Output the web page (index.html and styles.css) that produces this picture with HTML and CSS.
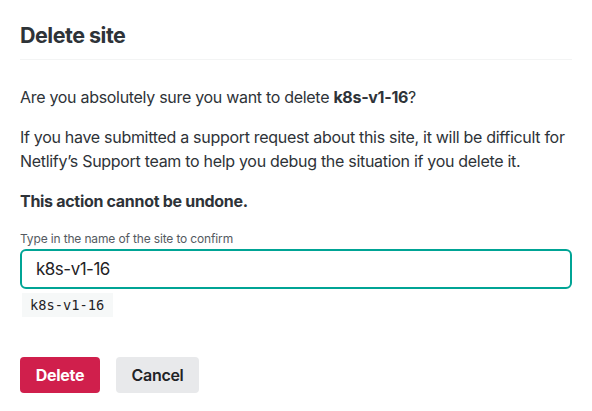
FILE: index.html
```html
<!DOCTYPE html>
<html>
<head>
<meta charset="utf-8">
<link rel="stylesheet" href="styles.css">
</head>
<body>
<div class="dialog">
  <h1 class="title">Delete site</h1>
  <div class="body">
    <p class="p1">Are you absolutely sure you want to delete <strong>k8s-v1-16</strong>?</p>
    <p class="p2">If you have submitted a support request about this site, it will be difficult for Netlify’s Support team to help you debug the situation if you delete it.</p>
    <p class="p3"><strong>This action cannot be undone.</strong></p>
    <label class="label">Type in the name of the site to confirm</label>
    <div class="input">k8s-v1-16</div>
    <div class="chip-row"><code class="chip">k8s-v1-16</code></div>
    <div class="actions">
      <button class="btn btn-danger">Delete</button>
      <button class="btn btn-cancel">Cancel</button>
    </div>
  </div>
</div>
</body>
</html>
```
FILE: styles.css
```css
html, body { margin: 0; padding: 0; background: #fff; }
body { font-family: Inter, "Liberation Sans", sans-serif; color: #2e3338; }
.dialog { padding: 0 20px; }
.title {
  margin: 0;
  padding: 21px 0 10px;
  font-size: 21.5px;
  font-weight: 700;
  letter-spacing: -0.5px;
  line-height: 28px;
  color: #2e3338;
  border-bottom: 1px solid #f3f4f4;
}
.p1, .p2, .p3 { margin: 0; font-size: 16px; line-height: 24px; letter-spacing: -0.3px; color: #2e3338; }
.p1 { margin-top: 25px; }
.p2 { margin-top: 16px; }
.p3 { margin-top: 16px; }
strong { font-weight: 700; }
.label {
  display: block;
  margin-top: 18px;
  font-size: 12px;
  line-height: 16px;
  letter-spacing: -0.15px;
  color: #545a61;
}
.input {
  margin-top: 2px;
  height: 36px;
  border: 2px solid #00a495;
  border-radius: 6px;
  font-size: 17px;
  letter-spacing: -0.5px;
  line-height: 36px;
  padding-left: 14px;
  color: #1f2326;
}
.chip-row { margin-top: 4px; display: flex; padding-left: 2px; }
.chip {
  font-family: "DejaVu Sans Mono", monospace;
  font-size: 13.7px;
  line-height: 24px;
  padding: 0 9px 0 8px;
  background: #f6f8f8;
  color: #1f2326;
}
.actions { display: flex; gap: 16px; margin-top: 40px; }
.btn {
  border: 0;
  border-radius: 4px;
  height: 36px;
  font-family: Inter, "Liberation Sans", sans-serif;
  font-size: 16px;
  font-weight: 700;
  letter-spacing: -0.3px;
  padding: 0;
}
.btn-danger { width: 80px; background: #d01f4c; color: #fff; }
.btn-cancel { width: 83px; background: #e8e9eb; color: #1f2326; font-weight: 600; }
```
